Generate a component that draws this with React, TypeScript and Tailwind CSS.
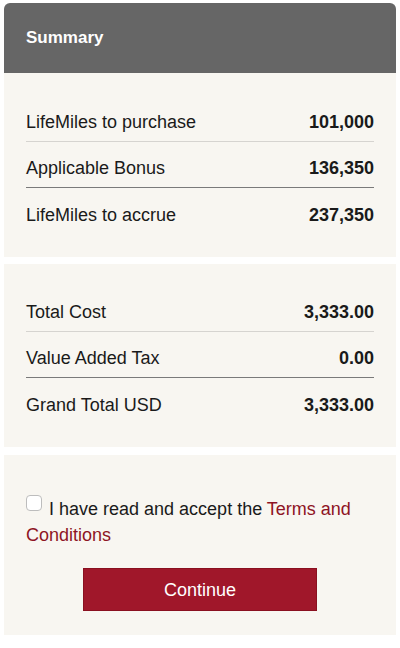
import React from "react";

const Row = ({ label, value, border }: { label: string; value: string; border?: "light" | "dark" }) => (
  <div
    className={
      "flex justify-between items-center h-[30px] pb-[9px] first:mt-0 mt-[16px] " +
      (border === "light" ? "border-b border-[#d6d4d0]" : border === "dark" ? "border-b border-[#7a7a7a]" : "")
    }
  >
    <span className="leading-[20px]">{label}</span>
    <span className="leading-[20px] font-bold">{value}</span>
  </div>
);

export default function App() {
  return (
    <div className="w-[400px] h-[648px] bg-white pt-[3px] px-[4px] text-[18px] leading-[20px] text-[#1a1a1a]" style={{ fontFamily: '"Liberation Sans", Arial, sans-serif' }}>
      <div className="h-[70px] bg-[#666666] rounded-t-[6px] flex items-center px-[22px]">
        <span className="text-white font-bold text-[17px]">Summary</span>
      </div>
      <div className="h-[184px] bg-[#f8f6f1] pt-[39px] px-[22px]">
        <Row label="LifeMiles to purchase" value="101,000" border="light" />
        <Row label="Applicable Bonus" value="136,350" border="dark" />
        <Row label="LifeMiles to accrue" value="237,350" />
      </div>
      <div className="h-[7px]" />
      <div className="h-[183px] bg-[#f8f6f1] pt-[38px] px-[22px]">
        <Row label="Total Cost" value="3,333.00" border="light" />
        <Row label="Value Added Tax" value="0.00" border="dark" />
        <Row label="Grand Total USD" value="3,333.00" />
      </div>
      <div className="h-[8px]" />
      <div className="h-[180px] bg-[#f8f6f1] pt-[40px] px-[22px]">
        <p className="leading-[26px]">
          <span className="inline-block w-[16px] h-[16px] rounded-[4px] border border-[#bdbdbd] bg-white mr-[7px] align-[4px]"></span>
          I have read and accept the <span className="text-[#8e1424]">Terms and Conditions</span>
        </p>
        <div className="flex justify-center mt-[20px]">
          <button className="w-[234px] h-[43px] bg-[#a0172a] border border-[#8a1020] text-white text-[18px]">Continue</button>
        </div>
      </div>
    </div>
  );
}
